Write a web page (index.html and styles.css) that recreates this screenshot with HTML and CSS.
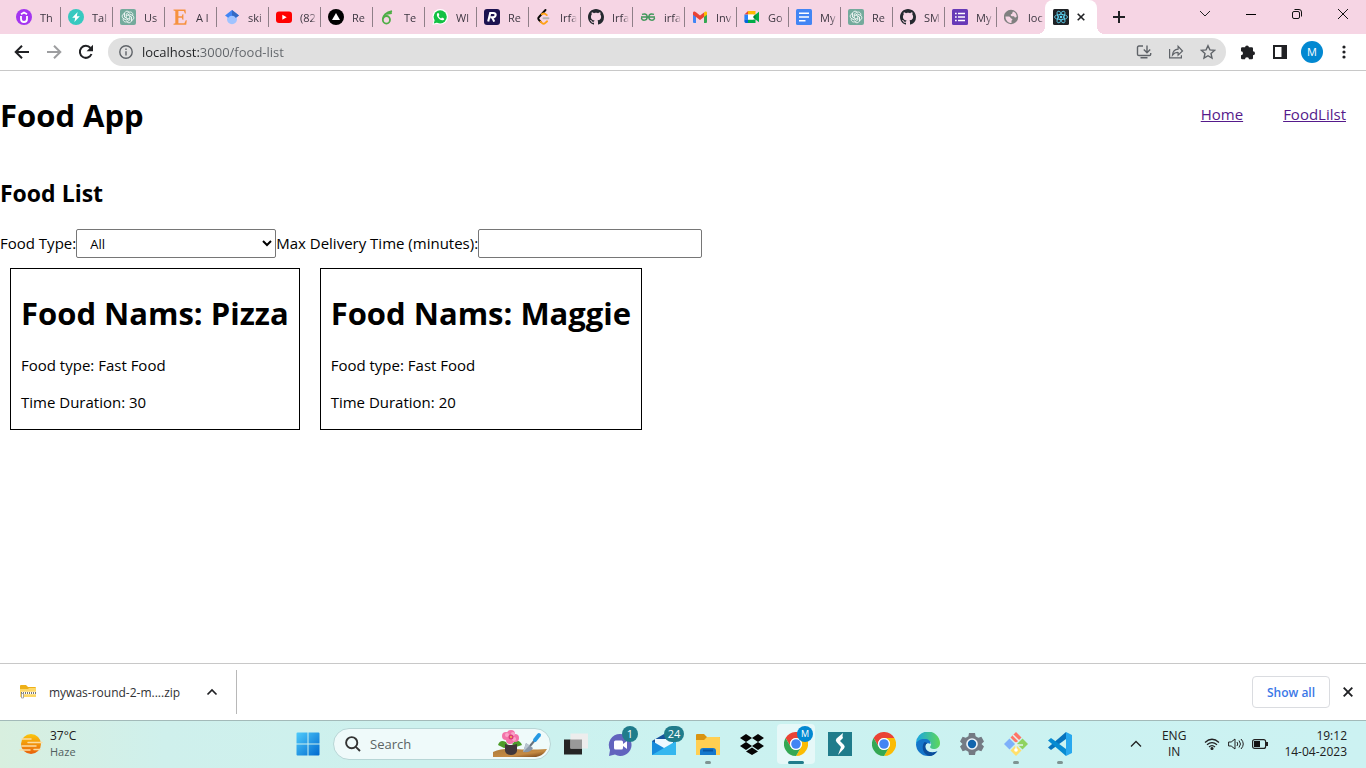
FILE: index.html
```html
<!DOCTYPE html>
<html lang="en">
<head>
<meta charset="utf-8">
<title>Food App</title>
<link rel="stylesheet" href="styles.css">
</head>
<body>
<svg class="defs" aria-hidden="true">
  <symbol id="gpt" viewBox="0 0 16 16">
    <rect width="16" height="16" rx="2" fill="#74aa9c"/>
    <g fill="none" stroke="#fff" stroke-width=".8" stroke-linejoin="round">
      <path id="petal" d="M6.2 9V5L8.800 3.400C11.100 2.100 13.500 4.200 12.700 6.700"/>
      <use href="#petal" transform="rotate(60 8 8)"/><use href="#petal" transform="rotate(120 8 8)"/>
      <use href="#petal" transform="rotate(180 8 8)"/><use href="#petal" transform="rotate(240 8 8)"/>
      <use href="#petal" transform="rotate(300 8 8)"/>
    </g>
  </symbol>
  <symbol id="github" viewBox="0 0 16 16">
    <path fill="#24292f" d="M8 0C3.58 0 0 3.58 0 8c0 3.54 2.29 6.53 5.47 7.59.4.07.55-.17.55-.38 0-.19-.01-.82-.01-1.49-2.01.37-2.53-.49-2.69-.94-.09-.23-.48-.94-.82-1.13-.28-.15-.68-.52-.01-.53.63-.01 1.08.58 1.23.82.72 1.21 1.87.87 2.33.66.07-.52.28-.87.51-1.07-1.78-.2-3.64-.89-3.64-3.95 0-.87.31-1.59.82-2.15-.08-.2-.36-1.02.08-2.12 0 0 .67-.21 2.2.82.64-.18 1.32-.27 2-.27s1.36.09 2 .27c1.53-1.04 2.2-.82 2.2-.82.44 1.1.16 1.92.08 2.12.51.56.82 1.27.82 2.15 0 3.07-1.87 3.75-3.65 3.95.29.25.54.73.54 1.48 0 1.07-.01 1.93-.01 2.2 0 .21.15.46.55.38A8.01 8.01 0 0 0 16 8c0-4.42-3.58-8-8-8z"/>
  </symbol>
  <symbol id="chrome" viewBox="0 0 24 24">
    <path d="M1.6 6A12 12 0 0 1 22.4 6H12a6 6 0 0 0-5.2 9z" fill="#ea4335"/>
    <path d="M22.4 6A12 12 0 0 1 12 24l5.2-9A6 6 0 0 0 12 6z" fill="#fbbc04"/>
    <path d="M12 24A12 12 0 0 1 1.6 6l5.2 9a6 6 0 0 0 10.4 0z" fill="#34a853"/>
    <circle cx="12" cy="12" r="6" fill="#fff"/><circle cx="12" cy="12" r="4.8" fill="#4285f4"/>
  </symbol>
</svg>

<div class="browser">
  <header class="tabstrip">
    <div class="tabs">
      <button class="tab"><svg viewBox="0 0 16 16"><circle cx="8" cy="8" r="8" fill="#a435f0"/><path d="M5 7v3a3 3 0 0 0 6 0V7M5 5.2 8 3.5l3 1.7" fill="none" stroke="#fff" stroke-width="1.8"/></svg><span>Th</span></button>
      <button class="tab"><svg viewBox="0 0 16 16"><circle cx="8" cy="8" r="8" fill="#36c9c0"/><path d="M9.6 3 4.2 8.8h3L6.4 13l5.4-5.8h-3z" fill="#fff"/></svg><span>Tal</span></button>
      <button class="tab"><svg><use href="#gpt"/></svg><span>Us</span></button>
      <button class="tab"><svg viewBox="0 0 16 16"><path d="M1.5.5h12l.4 4h-1l-1-2.6H6.4v5.4h3.4l.7-2h.9v5.4h-.9l-.7-2H6.4v5.6h6l1.4-3h1l-.6 4.400H1.500v-.9l1.800-.5V2l-1.800-.5z" fill="#f6913e"/></svg><span>A l</span></button>
      <button class="tab"><svg viewBox="0 0 16 16"><circle cx="8" cy="10.2" r="5" fill="#a0c3ff"/><path d="M1 6.5 8 1l7 5.5-3.2 2.3a4.5 4.5 0 0 0-7.6 0z" fill="#4285f4"/><path d="M8 1l7 5.5-3.2 2.3A4.5 4.5 0 0 0 8 6.6z" fill="#356ac3"/></svg><span>ski</span></button>
      <button class="tab"><svg viewBox="0 0 16 16"><rect y="2.5" width="16" height="11.5" rx="3" fill="#f00"/><path d="m6.3 5.7 4.4 2.5-4.4 2.6z" fill="#fff"/></svg><span>(82</span></button>
      <button class="tab"><svg viewBox="0 0 16 16"><circle cx="8" cy="8" r="8" fill="#000"/><path d="m8 4 4 7H4z" fill="#fff"/></svg><span>Re</span></button>
      <button class="tab"><svg viewBox="0 0 16 16"><g fill="none" stroke="#4fae47" stroke-width="1.8"><ellipse cx="6.4" cy="10.8" rx="3.6" ry="3.8"/><path d="M3 10C3.2 6 6 3.6 12 2.2M5.8 4.8c2.2.3 4.2-.4 6-.6"/></g></svg><span>Te</span></button>
      <button class="tab"><svg viewBox="0 0 16 16"><circle cx="8.2" cy="7.8" r="7.8" fill="#fff"/><path d="M.4 15.8 2 11l3.6 3.7z" fill="#fff"/><circle cx="8.2" cy="7.8" r="6.6" fill="#12c143"/><path d="m1.8 14.4.9-3.5 2.6 2.6z" fill="#12c143"/><path d="M5.3 4.2c-1.9 2.3 2.7 8.3 6.2 6.8.8-.6.8-1 .5-1.6L10 8.5l-.9 1C7.8 9 7 8 6.6 7l.8-.9-.9-2z" fill="#fff"/></svg><span>Wl</span></button>
      <button class="tab"><svg viewBox="0 0 16 16"><rect width="16" height="16" rx="3" fill="#1c1350"/><path d="M4.2 12.6 6.2 4h3.2c3.5 0 2.7 4.4-.6 4.4H6.4M8.2 8.4l2 4.2" fill="none" stroke="#fff" stroke-width="2.1"/></svg><span>Re</span></button>
      <button class="tab"><svg viewBox="0 0 16 16" fill="none" stroke-width="1.9" stroke-linecap="round"><path d="M9.500 1 3 8c-1 1-1 2 0 3l1.600 1.700" stroke="#070706"/><path d="m4.6 12.6 1.5 1.5c1 1 2 1 3 0l2-1.8M5.8 5.3c2-1.800 3.400-.8 5 .8" stroke="#ffa116"/><path d="M7.500 9.200h5" stroke="#b3b3b3"/></svg><span>Irfa</span></button>
      <button class="tab"><svg><use href="#github"/></svg><span>Irfa</span></button>
      <button class="tab"><svg viewBox="0 0 16 16" fill="none" stroke="#3f965a" stroke-width="1.400"><path d="M1 8h14M2 5.400C5 4.500 7.200 5 7.200 8c0 4-5 4.200-5.800.800M14 5.400C11 4.500 8.800 5 8.800 8c0 4 5 4.200 5.800.800"/></svg><span>irfa</span></button>
      <button class="tab"><svg viewBox="0 0 16 16"><path d="M1 4v9a1 1 0 0 0 1 1h2V6z" fill="#4285f4"/><path d="M15 4v9a1 1 0 0 1-1 1h-2V6z" fill="#34a853"/><path d="M12 3.4V8l3-2.3V4c0-1.7-1.7-2-3-.6" fill="#fbbc04"/><path d="M1 5.8V4c0-1.7 1.7-2 3-.7l4 3.1 4-3V8l-4 3-4-3z" fill="#ea4335"/></svg><span>Inv</span></button>
      <button class="tab"><svg viewBox="0 0 16 16"><path d="M4 2h7.5v3.5H4z" fill="#ffba00"/><path d="m4 2-3.6 3.6H4z" fill="#ea4335"/><path d="M.4 5.6H4v5H.4z" fill="#2684fc"/><path d="M.4 10.6H4V14H1.5L.4 13z" fill="#0066da"/><path d="M4 10.6h7.5V14H4zM11.5 5.5 15 2.7v10.6l-3.5-2.8L9 8z" fill="#00ac47"/><path d="M4 5.6h5.5v5H4z" fill="#fff"/><path d="M11.5 5.500V10.500L9 8z" fill="#00832d"/></svg><span>Go</span></button>
      <button class="tab"><svg viewBox="0 0 16 16"><rect width="16" height="16" rx="1.5" fill="#4285f4"/><path d="M3 4.200h10M3 8h10M3 11.800h6.500" stroke="#fff" stroke-width="1.500"/></svg><span>My</span></button>
      <button class="tab"><svg><use href="#gpt"/></svg><span>Re</span></button>
      <button class="tab"><svg><use href="#github"/></svg><span>SM</span></button>
      <button class="tab"><svg viewBox="0 0 16 16"><rect width="16" height="16" rx="1.500" fill="#673ab7"/><path d="M3 4.500h1.700M3 8h1.700M3 11.500h1.700M6 4.500h7M6 8h7M6 11.500h7" stroke="#fff" stroke-width="1.700"/></svg><span>My</span></button>
      <button class="tab tab-last"><svg viewBox="0 0 16 16"><circle cx="7" cy="8" r="7.200" fill="#808080"/><path d="M1.500 7.500h3.200c1.800 0 1.600 2 3 2.200 1 .2.800 1.600-.2 1.800v2.600C3.800 14 1.300 11 1.500 7.500zM9 2.400c2.400.8 3.800 3 3.700 5.400-1.200 1.200-2.400.6-2.600-.6-1.500.4-3.600 0-3.400-1.400.2-1 1.600-.8 1.600-1.600 0-.8.4-.8.7-1.800z" fill="#f6d5e4"/></svg><span>loc</span></button>
      <button class="tab tab-active" aria-label="Food App tab"><svg viewBox="0 0 16 16"><rect width="16" height="16" rx="1.500" fill="#1f2226"/><g fill="none" stroke="#61dafb" stroke-width=".8"><ellipse cx="8" cy="8" rx="6.500" ry="2.600"/><ellipse cx="8" cy="8" rx="6.500" ry="2.600" transform="rotate(60 8 8)"/><ellipse cx="8" cy="8" rx="6.500" ry="2.600" transform="rotate(120 8 8)"/></g><circle cx="8" cy="8" r="1.300" fill="#61dafb"/></svg><svg class="tab-close" viewBox="0 0 8 8"><path d="m.7.7 6.600 6.600M7.300.7.7 7.300" stroke="#202124" stroke-width="1.600"/></svg></button>
    </div>
    <button class="new-tab" aria-label="New tab"><svg viewBox="0 0 12 12" width="12" height="12"><path d="M6 0v12M0 6h12" stroke="#202124" stroke-width="2"/></svg></button>
    <div class="window-buttons">
      <button aria-label="Search tabs"><svg viewBox="0 0 12 12" width="12" height="12"><path d="m1 3 5 5 5-5" fill="none" stroke="#222"/></svg></button>
      <button aria-label="Minimize"><svg viewBox="0 0 12 12" width="12" height="12"><path d="M1 6.500h10" stroke="#000"/></svg></button>
      <button aria-label="Restore"><svg viewBox="0 0 12 12" width="12" height="12" fill="none" stroke="#111"><rect x="1.500" y="3.500" width="7" height="7" rx="1.500"/><path d="M3.500 1.500H8A2.500 2.500 0 0 1 10.500 4v4.500"/></svg></button>
      <button aria-label="Close"><svg viewBox="0 0 12 12" width="12" height="12"><path d="m1 1 10 10M11 1 1 11" stroke="#111"/></svg></button>
    </div>
  </header>

  <div class="toolbar">
    <button aria-label="Back"><svg viewBox="0 0 16 16" width="16" height="16" fill="none" stroke="#202124" stroke-width="2"><path d="M15 8H2M8 1.700 1.700 8 8 14.300"/></svg></button>
    <button aria-label="Forward"><svg viewBox="0 0 16 16" width="16" height="16" fill="none" stroke="#9d9ea0" stroke-width="2"><path d="M1 8h13M8 1.700 14.300 8 8 14.300"/></svg></button>
    <button aria-label="Reload"><svg viewBox="0 0 16 16" width="16" height="16"><path d="M13.500 10A6 6 0 1 1 12.500 4" fill="none" stroke="#202124" stroke-width="2"/><path d="M15 .8v6.400H8.600z" fill="#202124"/></svg></button>
    <div class="omnibox">
      <svg class="info" viewBox="0 0 14 14" fill="none" stroke="#5f6368" stroke-width="1.400"><circle cx="7" cy="7" r="6.200"/><path d="M7 6.200v4.200M7 3.400v1.500"/></svg>
      <input class="url" aria-label="Address" value="localhost:3000/food-list">
      <button aria-label="Install"><svg viewBox="0 0 16 16" width="16" height="16" fill="none" stroke="#5f6368" stroke-width="1.400"><path d="M7 2H3Q1.500 2 1.500 3.500v6.800q0 1.200 1.500 1.200h10.500q1.200 0 1.200-1.200V9M4.500 13.700h7M11 1.500v7M7.800 5.500 11 8.700l3.200-3.200"/></svg></button>
      <button aria-label="Share"><svg viewBox="0 0 16 16" width="16" height="16" fill="none" stroke="#5f6368" stroke-width="1.200"><path d="M1.600 5v8.900h11.800v-2.600M4.500 11c.4-4 2.500-5.600 5.600-5.800V2.300L14.500 7l-4.400 4.200V8.500C7.700 8.300 6 9.200 4.500 11z"/></svg></button>
      <button aria-label="Bookmark"><svg viewBox="0 0 16 16" width="16" height="16"><path d="m8 1.700 1.900 4.200 4.600.5L11 9.500l1 4.600-4-2.400-4 2.400 1-4.600-3.500-3.100 4.600-.5z" fill="none" stroke="#5f6368" stroke-width="1.400"/></svg></button>
    </div>
    <button aria-label="Extensions"><svg viewBox="0 0 16 16" width="16" height="16"><path d="M1 4.500q0-1.200 1.200-1.200h2.900a1.900 1.900 0 0 1 3.800 0h2.900Q13 3.300 13 4.500v2.700a2 2 0 0 1 0 4V14q0 1.200-1.200 1.200H9a2 2 0 0 0-4 0H2.200Q1 15.200 1 14v-2.800a2 2 0 0 0 0-4z" fill="#202124"/></svg></button>
    <button aria-label="Side panel"><svg viewBox="0 0 14 14" width="14" height="14"><path d="M0 0h14v14H0zm2 2v10h6.500V2z" fill="#202124" fill-rule="evenodd"/></svg></button>
    <button aria-label="Profile"><span class="avatar">M</span></button>
    <button aria-label="Menu"><svg viewBox="0 0 4 14" width="4" height="14" fill="#202124"><circle cx="2" cy="2" r="1.600"/><circle cx="2" cy="7" r="1.600"/><circle cx="2" cy="12" r="1.600"/></svg></button>
  </div>
</div>

<main class="app">
  <div class="app-header">
    <h1>Food App</h1>
    <nav><a href="#home">Home</a><a href="#food-list">FoodLilst</a></nav>
  </div>
  <h2>Food List</h2>
  <form class="filters">
    <label for="food-type">Food Type:</label>
    <select id="food-type"><option>All</option></select>
    <label for="max-time">Max Delivery Time (minutes):</label>
    <input id="max-time" type="text">
  </form>
  <div class="cards">
    <article class="card"><h1>Food Nams: Pizza</h1><p>Food type: Fast Food</p><p>Time Duration: 30</p></article>
    <article class="card"><h1>Food Nams: Maggie</h1><p>Food type: Fast Food</p><p>Time Duration: 20</p></article>
  </div>
</main>

<section class="downloads" aria-label="Downloads">
  <button class="download">
    <svg viewBox="0 0 16 16" width="16" height="16"><path d="M0 2q0-1 1-1h5l2 2h7q1 0 1 1v9H0z" fill="#eeb018"/><path d="M0 5h8l1-1h7v9H0z" fill="#fdd868"/><path d="M1 9h15" stroke="#fff" stroke-width="2.500"/><path d="M1 9h15" stroke="#777" stroke-width="2" stroke-dasharray="1 1"/><path d="M1.500 9.500h2V14h-2z" fill="#fff" stroke="#888" stroke-width=".7"/></svg>
    <span>mywas-round-2-m....zip</span>
    <svg viewBox="0 0 12 12" width="12" height="12"><path d="m1.500 8.500 4.500-4.500 4.500 4.500" fill="none" stroke="#202124" stroke-width="1.700"/></svg>
  </button>
  <button class="show-all">Show all</button>
  <button class="close-downloads" aria-label="Close downloads"><svg viewBox="0 0 10 10" width="10" height="10"><path d="m.7.7 8.600 8.600M9.300.7.7 9.300" stroke="#202124" stroke-width="1.900"/></svg></button>
</section>

<footer class="taskbar">
  <button class="weather">
    <svg viewBox="0 0 24 22" width="24" height="22"><defs><linearGradient id="sun" x2="0" y2="1"><stop stop-color="#fbc70c"/><stop offset="1" stop-color="#e8600c"/></linearGradient></defs><circle cx="12" cy="11" r="10" fill="url(#sun)"/><path d="M3 6h9M9 9.500h14M3 13h14M1 17h10M15 16.500h6" stroke="#fbdca2" stroke-width="1.500" stroke-linecap="round"/></svg>
    <span>37°C<small>Haze</small></span>
  </button>
  <div class="launcher">
    <button class="task" aria-label="Start"><svg viewBox="0 0 24 24"><defs><linearGradient id="win" x2="1" y2="1"><stop stop-color="#4fcbfb"/><stop offset="1" stop-color="#0069cf"/></linearGradient></defs><path d="M.5 1.500q0-1 1-1h10v11H.5zm12-1h10q1 0 1 1v10h-11zM.5 12.500h11v11h-10q-1 0-1-1zm12 0h11v10q0 1-1 1h-10z" fill="url(#win)"/></svg></button>
    <label class="search">
      <svg viewBox="0 0 16 16" width="16" height="16" fill="none" stroke="#333" stroke-width="1.900"><circle cx="6.700" cy="6.700" r="5.600"/><path d="m10.800 10.800 4.200 4.200"/></svg>
      <input type="text" placeholder="Search" aria-label="Search">
      <svg viewBox="0 0 54 28" width="54" height="28"><defs><linearGradient id="wood" x2="1" y2="1"><stop stop-color="#ad7b3b"/><stop offset=".6" stop-color="#c58a43"/><stop offset="1" stop-color="#6f3d15"/></linearGradient></defs><path d="M0 22q9-4 22-3t32 0l-2 3q-3 4-9 5H0z" fill="url(#wood)"/><path d="M5 15q2-6 8-3l3 5-5 1zM19 14q5-6 9-1l1 2-6 2z" fill="#4d9c29"/><path d="M12 14q6 2 12 0v7q-1 4-6 4t-6-4z" fill="#403639"/><g fill="#f473a9"><circle cx="13" cy="6" r="4"/><circle cx="18" cy="4" r="4"/><circle cx="22" cy="8" r="4"/><circle cx="17" cy="10" r="4"/></g><g fill="#fba3c8"><circle cx="14" cy="5" r="2"/><circle cx="20" cy="4" r="2"/><circle cx="21" cy="9" r="2"/></g><circle cx="18" cy="7" r="2.500" fill="#d93d7b"/><circle cx="18" cy="7" r="1" fill="#f7bd4c"/><path d="m33 13 7 5q-2 5-10 4z" fill="#8796a7"/><path d="m33 13 3.500 2.500L30 22z" fill="#b9c5d0"/><path d="m37 16 5-6" stroke="#65727d" stroke-width="2"/><path d="m42 10 4-5" stroke="#2499e3" stroke-width="4" stroke-linecap="round"/></svg>
    </label>
    <button class="task" aria-label="Task view"><svg viewBox="0 0 24 24"><path d="M0 7.500h18v15H0z" fill="#252525"/><path d="M6.500 1.500H24v15H6.500z" fill="#ededed"/><path d="M6.500 7.500H18v9H6.500z" fill="#999"/></svg></button>
    <button class="task" aria-label="Chat"><svg viewBox="0 0 24 24"><path d="M12 2a11 11 0 1 1-5 20.500L1 24l1-6A11 11 0 0 1 12 2z" fill="#6264be"/><rect x="6" y="8.500" width="9" height="9" rx="1.500" fill="#fff"/><path d="m15 12 4-3v8l-4-3z" fill="#fff"/></svg><i class="badge">1</i></button>
    <button class="task" aria-label="Mail"><svg viewBox="0 0 24 24"><path d="m0 9 12-7 12 7v8H0z" fill="#17549e"/><path d="M3 7h18v10H3z" fill="#eef8ff"/><path d="M0 9v14h24z" fill="#168bdc"/><path d="M24 9v14H0z" fill="#35b7ef"/></svg><i class="badge wide">24</i></button>
    <button class="task open" aria-label="Files"><svg viewBox="0 0 24 24"><path d="M0 3q0-1 1-1h7l3 3h12q1 0 1 1v5H0z" fill="#d99411"/><path d="M0 8h8l3-3h12q1 0 1 1v17H0z" fill="#ffcf52"/><path d="M4 23v-4q0-3 3-3h10q3 0 3 3v4z" fill="#1478cc"/><path d="M7 18.500h10" stroke="#0754a2" stroke-width="2"/></svg></button>
    <button class="task" aria-label="Dropbox"><svg viewBox="0 0 24 24"><path d="m6 2 6 4-6 4-6-4zm12 0 6 4-6 4-6-4zM6 10l6 4-6 4-6-4zm12 0 6 4-6 4-6-4zm-6 5.500 6 4-6 3.500-6-3.500z" fill="#050505"/></svg></button>
    <button class="task current" aria-label="Chrome, profile M"><svg><use href="#chrome"/></svg><i class="badge profile">M</i></button>
    <button class="task" aria-label="S app"><svg viewBox="0 0 24 24"><path d="M0 0h24v24H0z" fill="#207c8b"/><path d="M15 1 8.500 6.500q-1.500 1.500 0 3.500l4.500 5-3 8 6-6.500q1.500-2 0-3.500l-4-4 3-3q-1-2 0-5z" fill="#fff"/></svg></button>
    <button class="task" aria-label="Chrome"><svg><use href="#chrome"/></svg></button>
    <button class="task" aria-label="Edge"><svg viewBox="0 0 24 24"><defs><linearGradient id="edge" x2="1"><stop stop-color="#1aa4e4"/><stop offset="1" stop-color="#5ed75a"/></linearGradient></defs><path d="M0 12A12 12 0 0 1 24 11c0 4-3 6-6.500 6-3 0-4-1.500-3-3 2-3-1-6-5-6-5 0-8 2-9.500 4z" fill="url(#edge)"/><path d="M0 12c1-3 4-5 8.500-5 4 0 6.500 2 6 5-4-2-6 1-5 4 1 4 7 6 12 3-2 3-5.500 5-9.500 5A12 12 0 0 1 0 12z" fill="#1475ca"/><path d="M8.500 10c-4 5-1 13 5 14 3 0 6-2 8-5-5 3-11 1-12-3-.5-2 0-4 2-5z" fill="#0b4d9a"/></svg></button>
    <button class="task" aria-label="Settings"><svg viewBox="0 0 24 24"><path d="m9 1-.6 3.300-2.700 1.500L2.600 4.700 0 9.500 2.500 12 0 14.500l2.600 4.800 3.100-1.100 2.700 1.500L9 23h6l.6-3.300 2.700-1.500 3.100 1.100 2.600-4.800-2.500-2.500L24 9.500l-2.600-4.800-3.100 1.100-2.700-1.500L15 1z" fill="#747a83"/><circle cx="12" cy="12" r="5.800" fill="#edf4fa"/><circle cx="12" cy="12" r="4.200" fill="#1265ad"/></svg></button>
    <button class="task open" aria-label="Git"><svg viewBox="0 0 24 24"><path d="m12 0 5.500 5.500-5.500 5.500-5.500-5.500z" fill="#ff7467"/><path d="m5.500 6.500 5.500 5.500-5.500 5.500L0 12z" fill="#7eb0fa"/><path d="m18.500 6.500 5.500 5.500-5.500 5.500L13 12z" fill="#8fd360"/><path d="m12 13 5.500 5.500L12 24l-5.500-5.500z" fill="#ffe06b"/><path d="M9 3l6 6M12 10v8M12 13h7" stroke="#e4f3ee" stroke-width="1.500"/><circle cx="12" cy="18" r="1.800" fill="#fff"/></svg></button>
    <button class="task open" aria-label="Code"><svg viewBox="0 0 24 24"><path d="m18 0 6 3v18l-6 3z" fill="#28a8ef"/><path d="m18 0v7L3 18l-3-2.500z" fill="#0873bd"/><path d="m0 8.500 3-2.500 15 11v7z" fill="#078bd2"/></svg></button>
  </div>
  <div class="tray">
    <button aria-label="Hidden icons"><svg viewBox="0 0 12 12" width="12" height="12"><path d="m1 8.500 5-5 5 5" fill="none" stroke="#222" stroke-width="1.300"/></svg></button>
    <button class="lang">ENG<br>IN</button>
    <button class="status" aria-label="Network, volume, battery">
      <svg viewBox="0 0 16 16" width="16" height="16" fill="none" stroke="#222" stroke-width="1.200"><path d="M1 6.500q7-6.500 14 0M3 8.800q5-4.500 10 0M5 11q3-2.800 6 0"/><circle cx="8" cy="12.500" r="1" fill="#222"/></svg>
      <svg viewBox="0 0 16 16" width="16" height="16" fill="none" stroke="#222"><path d="M.6 6v4h2.600L7 13V3L3.200 6zM9 6q1.500 2 0 4M11 4.500q3 3.500 0 7M13 3q4.500 5 0 10"/></svg>
      <svg viewBox="0 0 16 16" width="16" height="16"><rect x=".6" y="3.600" width="13" height="8.800" rx="2" fill="none" stroke="#222" stroke-width="1.200"/><rect x="2" y="5" width="6" height="6" fill="#111"/><path d="M15 6v4" stroke="#222" stroke-width="2"/></svg>
    </button>
    <button class="clock">19:12<br>14-04-2023</button>
  </div>
</footer>
</body>
</html>
```
FILE: styles.css
```css
* { box-sizing: border-box; }
body {
  margin: 0;
  min-height: 100vh;
  display: flex;
  flex-direction: column;
  font: 15px/21px "Open Sans", "Noto Sans", sans-serif;
  color: #000;
  background: #fff;
}
button { font: inherit; color: inherit; background: none; border: 0; padding: 0; }
svg { display: block; flex: none; }
.defs { position: absolute; width: 0; height: 0; }

/* Browser frame */
.tabstrip { display: flex; height: 34px; background: #f6d5e4; padding-left: 8px; }
.tabs { display: flex; }
.tab {
  width: 52px;
  display: flex;
  align-items: center;
  gap: 8px;
  padding: 0 0 0 8px;
  position: relative;
  font-size: 11px;
  color: #3c3640;
}
.tab svg { width: 16px; height: 16px; }
.tab span {
  width: 18px;
  white-space: nowrap;
  text-align: left;
  mask-image: linear-gradient(to right, #000 11px, transparent 17px);
}
.tab::after {
  content: "";
  position: absolute;
  right: -1px;
  top: 7px;
  width: 1px;
  height: 20px;
  background: #8f7f88;
}
.tab-last::after { display: none; }
.tab-active { margin-left: -3px; background: #fff; border-radius: 8px 8px 0 0; }
.tab-active::before, .tab-active::after {
  content: "";
  position: absolute;
  top: auto;
  bottom: 0;
  width: 8px;
  height: 8px;
}
.tab-active::before { left: -8px; background: radial-gradient(circle at 0 0, transparent 8px, #fff 8px); }
.tab-active::after { right: -8px; background: radial-gradient(circle at 100% 0, transparent 8px, #fff 8px); }
.tab .tab-close { width: 8px; height: 8px; }
.new-tab { width: 28px; margin-left: 8px; display: grid; place-items: center; }
.window-buttons { display: flex; margin-left: auto; }
.window-buttons button { width: 46px; height: 28px; display: grid; place-items: center; }
.toolbar {
  display: flex;
  align-items: center;
  height: 37px;
  padding: 0 6px;
  border-bottom: 1px solid #c8c8c8;
}
.toolbar button { width: 32px; height: 28px; display: grid; place-items: center; }
.omnibox {
  flex: 1;
  display: flex;
  align-items: center;
  height: 28px;
  margin: 0 6px;
  padding: 0 2px 0 11px;
  border-radius: 14px;
  background: #e0e0e0;
}
.info { width: 14px; height: 14px; }
.url {
  flex: 1;
  min-width: 0;
  margin-left: 9px;
  padding: 0;
  border: 0;
  font: 13px/20px "Open Sans", sans-serif;
  color: transparent;
  background: linear-gradient(to right, #202124 57px, #5f6368 57px);
  background-clip: text;
}
.avatar {
  width: 22px;
  height: 22px;
  border-radius: 50%;
  background: #0288d1;
  color: #fff;
  font-size: 11px;
  line-height: 22px;
}

/* Food app */
.app { flex: 1; }
.app-header { display: flex; align-items: center; justify-content: space-between; }
.app-header nav { display: flex; gap: 40px; padding-right: 20px; }
a { color: #551a8b; }
h1 { font-size: 31px; line-height: 43px; margin: 23px 0 20px; }
h2 { font-size: 23px; line-height: 32px; margin: 20px 0; }
.filters { display: flex; align-items: center; }
.filters select, .filters input {
  width: 200px;
  height: 29px;
  border: 1px solid #767676;
  border-radius: 2px;
  background: #fff;
  color: #000;
  font: 13px "Open Sans", sans-serif;
  padding: 0 0 0 9px;
}
.filters input { width: 224px; }
.cards { display: flex; flex-wrap: wrap; }
.card { margin: 10px; padding: 0 10px; border: 1px solid #000; }
.card p { margin: 16px 0; }

/* Downloads */
.downloads {
  display: flex;
  align-items: center;
  height: 57px;
  padding-right: 13px;
  border-top: 1px solid #c8c8c8;
}
.download {
  width: 237px;
  height: 44px;
  display: flex;
  align-items: center;
  padding: 0 18px 0 20px;
  border-right: 1px solid #b8b8b8;
  font-size: 12px;
  color: #303134;
}
.download span { margin: 0 auto 0 13px; }
.show-all {
  width: 78px;
  height: 32px;
  margin-left: auto;
  border: 1px solid #dadce0;
  border-radius: 4px;
  font-size: 12px;
  font-weight: 600;
  color: #3b78e7;
}
.close-downloads { margin-left: 13px; }

/* Taskbar */
.taskbar {
  display: grid;
  grid-template-columns: 1fr auto 1fr;
  align-items: center;
  height: 48px;
  padding-bottom: 1px;
  border-top: 1px solid #a3bab9;
  background: linear-gradient(to right, #d8efdf, #cff0ec 12%, #cbf2f0 50%, #ccf2f2);
  font-size: 12px;
  line-height: 16px;
  color: #202020;
}
.weather { display: flex; align-items: center; gap: 7px; padding-left: 19px; text-align: left; }
.weather small { display: block; font-size: 11px; color: #52605f; }
.launcher { display: flex; align-items: center; margin-left: 2px; }
.task { position: relative; width: 44px; height: 40px; display: grid; place-items: center; }
.task svg { width: 24px; height: 24px; }
.search {
  display: flex;
  align-items: center;
  width: 218px;
  height: 32px;
  margin: 0 3px;
  padding: 0 3px 0 11px;
  border: 1px solid #b7d6d6;
  border-radius: 16px;
  background: #effafa;
}
.search input {
  flex: 1;
  min-width: 0;
  margin-left: 9px;
  padding: 0;
  border: 0;
  background: none;
  font: 13px "Open Sans", sans-serif;
}
.search input::placeholder { color: #5b6464; opacity: 1; }
.badge {
  position: absolute;
  top: 2px;
  right: 4px;
  min-width: 16px;
  height: 16px;
  border-radius: 8px;
  background: #207c8b;
  color: #fff;
  font-size: 11px;
  font-style: normal;
  line-height: 16px;
}
.badge.wide { width: 20px; right: 2px; }
.badge.profile { background: #0288d1; font-size: 9px; }
.open::after, .current::after {
  content: "";
  position: absolute;
  bottom: 0;
  left: 19px;
  width: 6px;
  height: 3px;
  border-radius: 2px;
  background: #7e9492;
}
.current { width: 38px; margin: 0 3px; border-radius: 4px; background: #e6f8f8; }
.current .badge { right: 2px; }
.current::after { left: 11px; width: 16px; background: #207c8b; }
.tray { display: flex; align-items: center; justify-content: flex-end; padding-right: 19px; }
.lang { margin-left: 20px; text-align: center; }
.status { display: flex; gap: 8px; margin: 0 16px 0 18px; }
.clock { text-align: right; }
```
